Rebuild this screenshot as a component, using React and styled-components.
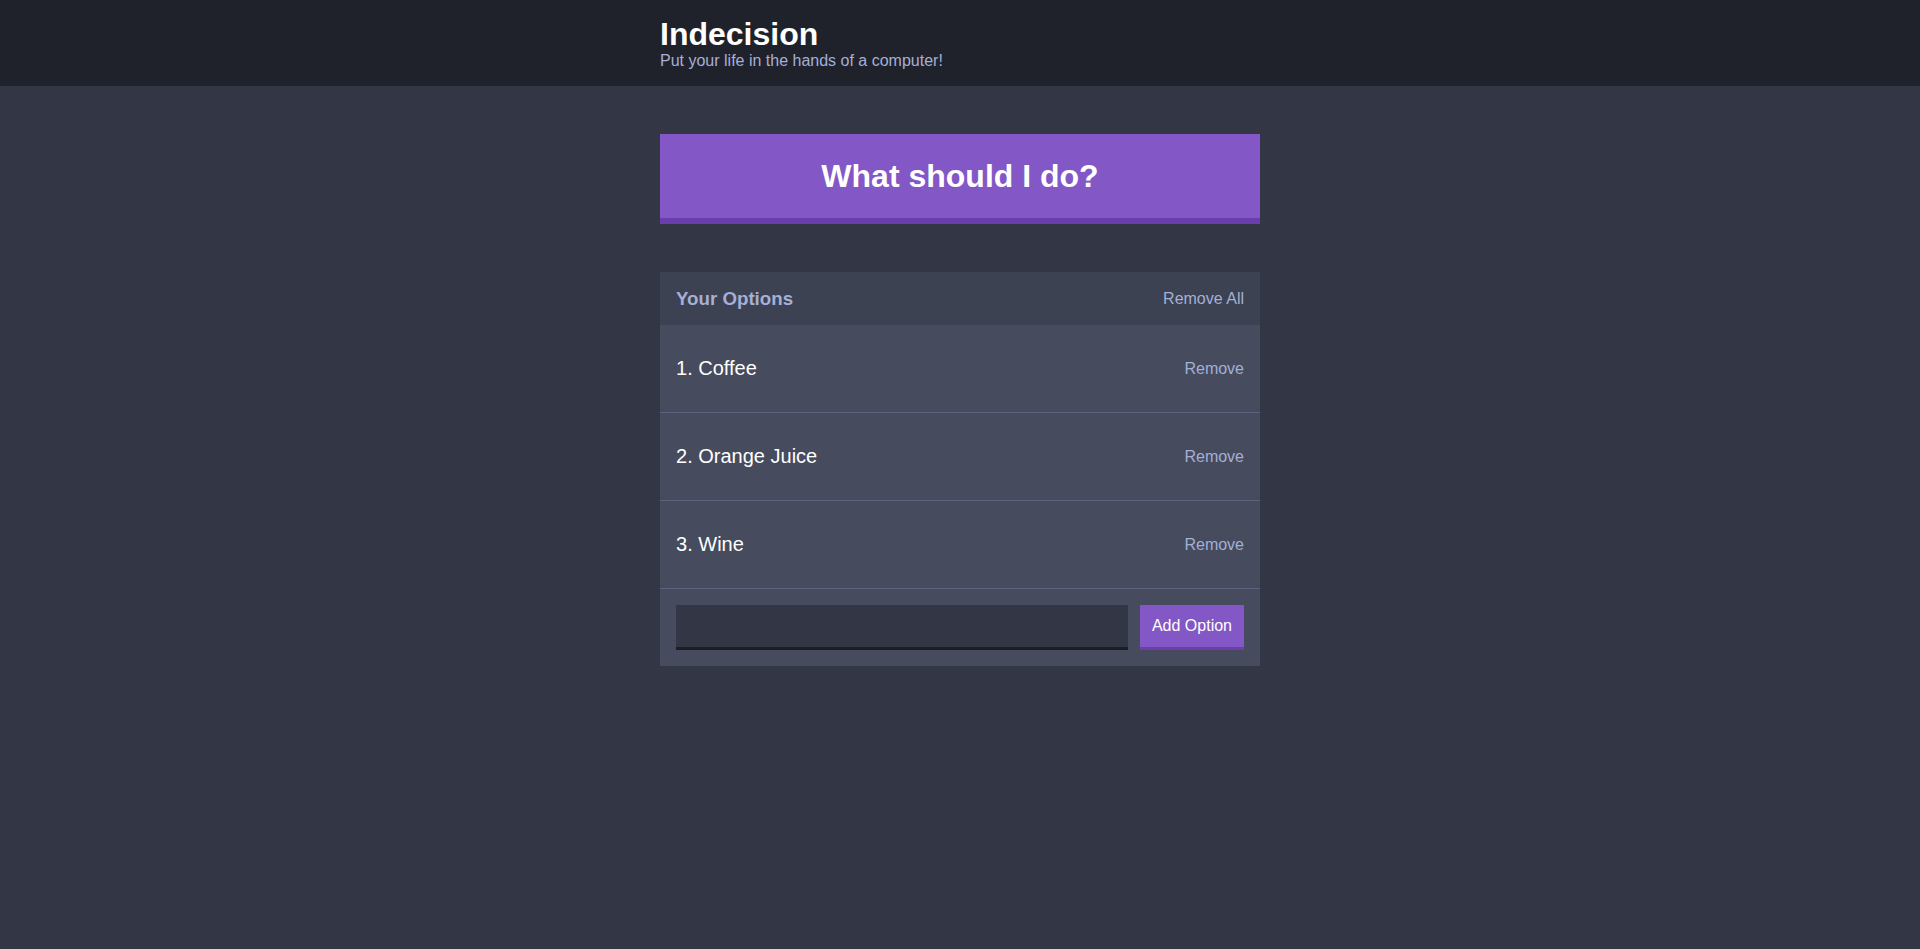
import React, { useState } from 'react'
import styled, { createGlobalStyle } from 'styled-components'

const GlobalStyle = createGlobalStyle`
  * {
    box-sizing: border-box;
  }
  html, body {
    margin: 0;
    padding: 0;
  }
  body {
    background: #333745;
    font-family: "Liberation Sans", Helvetica, Arial, sans-serif;
    font-size: 16px;
    min-height: 949px;
  }
  button, input {
    font-family: inherit;
    font-size: inherit;
  }
`

const Container = styled.div`
  box-sizing: content-box;
  max-width: 600px;
  margin: 0 auto;
  padding: 0 16px;
`

const HeaderBar = styled.header`
  background: #20222b;
  color: #fff;
  margin-bottom: 48px;
  padding: 16px 0;
`

const Title = styled.h1`
  font-size: 32px;
  line-height: 36px;
  margin: 0;
`

const Subtitle = styled.h2`
  color: #a5afd7;
  font-size: 16px;
  line-height: 18px;
  font-weight: 500;
  margin: 0;
`

const BigButton = styled.button`
  display: block;
  width: 100%;
  background: #8357c5;
  border: none;
  border-bottom: 6px solid #6a3fab;
  color: #fff;
  font-weight: bold;
  font-size: 32px;
  line-height: 36px;
  margin-bottom: 48px;
  padding: 24px;
  cursor: pointer;
`

const Widget = styled.div`
  background: #464b5e;
  margin-bottom: 48px;
`

const WidgetHeader = styled.div`
  background: #3c4251;
  color: #a5afd7;
  display: flex;
  justify-content: space-between;
  align-items: center;
  padding: 16px;
`

const WidgetTitle = styled.h3`
  margin: 0;
  font-size: 18.72px;
  line-height: 21px;
`

const LinkButton = styled.button`
  background: none;
  border: none;
  color: #a5afd7;
  padding: 0;
  cursor: pointer;
`

const Option = styled.div`
  display: flex;
  justify-content: space-between;
  align-items: center;
  padding: 16px;
  border-bottom: 1px solid #5d6481;
`

const OptionText = styled.p`
  color: #fff;
  font-weight: 500;
  font-size: 20px;
  line-height: 23px;
  margin: 16px 0;
`

const AddForm = styled.form`
  display: flex;
  padding: 16px;
`

const Input = styled.input`
  background: #333745;
  border: none;
  border-bottom: 3px solid #1c1e26;
  color: #a5afd7;
  flex-grow: 1;
  margin-right: 12px;
  padding: 8px;
  outline: none;
`

const Button = styled.button`
  background: #8357c5;
  border: none;
  border-bottom: 3px solid #6a3fab;
  color: #fff;
  font-weight: 500;
  line-height: 18px;
  padding: 12px;
  cursor: pointer;
`

export default function App() {
  const [options, setOptions] = useState(['Coffee', 'Orange Juice', 'Wine'])
  const [value, setValue] = useState('')

  const onAdd = e => {
    e.preventDefault()
    const v = value.trim()
    if (v && !options.includes(v)) setOptions([...options, v])
    setValue('')
  }

  return (
    <>
      <GlobalStyle />
      <HeaderBar>
        <Container>
          <Title>Indecision</Title>
          <Subtitle>Put your life in the hands of a computer!</Subtitle>
        </Container>
      </HeaderBar>
      <Container>
        <BigButton>What should I do?</BigButton>
        <Widget>
          <WidgetHeader>
            <WidgetTitle>Your Options</WidgetTitle>
            <LinkButton onClick={() => setOptions([])}>Remove All</LinkButton>
          </WidgetHeader>
          {options.map((opt, i) => (
            <Option key={opt}>
              <OptionText>
                {i + 1}. {opt}
              </OptionText>
              <LinkButton onClick={() => setOptions(options.filter(o => o !== opt))}>
                Remove
              </LinkButton>
            </Option>
          ))}
          <AddForm onSubmit={onAdd}>
            <Input value={value} onChange={e => setValue(e.target.value)} />
            <Button>Add Option</Button>
          </AddForm>
        </Widget>
      </Container>
    </>
  )
}
